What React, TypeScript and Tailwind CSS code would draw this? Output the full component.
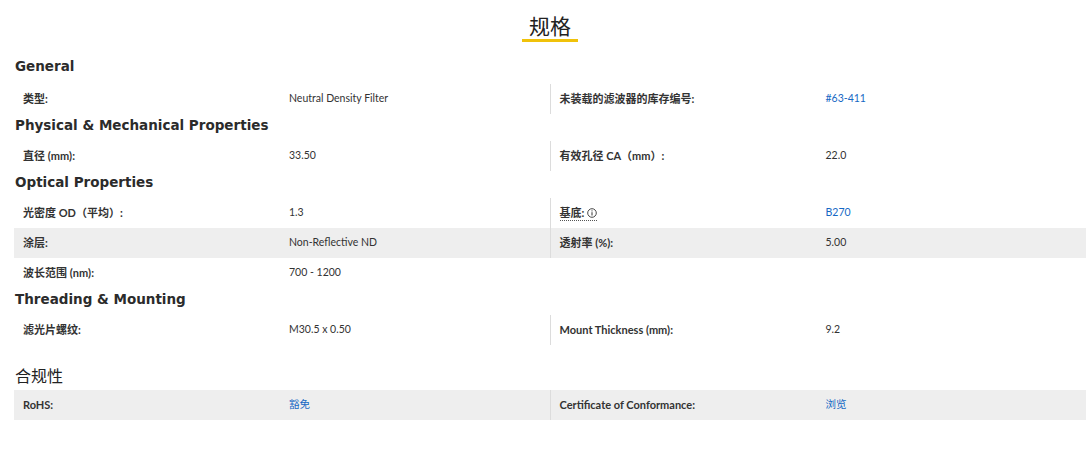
type Cell = { label: string; value: string; link?: boolean; info?: boolean };
type Row = { left: Cell; right?: Cell; gray?: boolean };
type Section = { title: string; rows: Row[] };

const sections: Section[] = [
  {
    title: "General",
    rows: [
      {
        left: { label: "类型:", value: "Neutral Density Filter" },
        right: { label: "未装载的滤波器的库存编号:", value: "#63-411", link: true },
      },
    ],
  },
  {
    title: "Physical & Mechanical Properties",
    rows: [
      {
        left: { label: "直径 (mm):", value: "33.50" },
        right: { label: "有效孔径 CA（mm）:", value: "22.0" },
      },
    ],
  },
  {
    title: "Optical Properties",
    rows: [
      {
        left: { label: "光密度 OD（平均）:", value: "1.3" },
        right: { label: "基底:", value: "B270", link: true, info: true },
      },
      {
        gray: true,
        left: { label: "涂层:", value: "Non-Reflective ND" },
        right: { label: "透射率 (%):", value: "5.00" },
      },
      { left: { label: "波长范围 (nm):", value: "700 - 1200" } },
    ],
  },
  {
    title: "Threading & Mounting",
    rows: [
      {
        left: { label: "滤光片螺纹:", value: "M30.5 x 0.50" },
        right: { label: "Mount Thickness (mm):", value: "9.2" },
      },
    ],
  },
];

const font = "font-['Lato','Noto_Sans_CJK_SC',sans-serif]";

function InfoIcon() {
  return (
    <svg width="10" height="10" viewBox="0 0 10 10" className="inline-block ml-[3px] -mt-[2px] align-middle">
      <circle cx="5" cy="5" r="4.3" fill="none" stroke="#333" strokeWidth="0.9" />
      <rect x="4.5" y="4.2" width="1" height="3.3" fill="#333" />
      <rect x="4.5" y="2.4" width="1" height="1" fill="#333" />
    </svg>
  );
}

function Half({ cell, divider }: { cell?: Cell; divider?: boolean }) {
  if (!cell) return <div className="flex-1" />;
  return (
    <div
      className={`flex-1 grid grid-cols-[275px_1fr] items-center h-full ${
        divider ? "border-l border-[#dcdcdc] pl-[9px]" : "pl-[9px]"
      }`}
    >
      <div className="text-[11px] font-bold text-[#333]">
        {cell.info ? (
          <span className="border-b border-dotted border-[#555] pb-[1px]">
            {cell.label}
            <InfoIcon />
          </span>
        ) : (
          cell.label
        )}
      </div>
      <div
        className={`-ml-[9px] text-[10.5px] ${
          cell.link ? "text-[#1568c4]" : "text-[#333]"
        }`}
      >
        {cell.value}
      </div>
    </div>
  );
}

function SpecRow({ row }: { row: Row }) {
  return (
    <div className={`flex h-[30px] ${row.gray ? "bg-[#eeeeee]" : ""}`}>
      <Half cell={row.left} />
      <Half cell={row.right} divider />
    </div>
  );
}

export default function App() {
  return (
    <div className={`w-[1089px] h-[452px] bg-white pl-[14px] pr-[3px] ${font} text-[#333]`}>
      <div className="flex flex-col items-center pt-[14px]">
        <div className="text-[21px] leading-[24px] text-[#222]">规格</div>
        <div className="mt-[1px] h-[3px] w-[56px] bg-[#f0c20a]" />
      </div>

      {sections.map((s, i) => (
        <div key={s.title}>
          <div
            className={`font-['DejaVu_Sans',sans-serif] text-[13.5px] font-bold leading-[20px] text-[#2b2b2b] pl-[1px] ${
              i === 0 ? "pt-[14px] pb-[8px]" : "pt-[1px] h-[27px]"
            }`}
          >
            {s.title}
          </div>
          {s.rows.map((r, j) => (
            <SpecRow key={j} row={r} />
          ))}
        </div>
      ))}

      <div className="pt-[21px] pb-[4px] text-[16px] leading-[20px] text-[#222] pl-[1px]">
        合规性
      </div>
      <SpecRow
        row={{
          gray: true,
          left: { label: "RoHS:", value: "豁免", link: true },
          right: { label: "Certificate of Conformance:", value: "浏览", link: true },
        }}
      />
    </div>
  );
}
